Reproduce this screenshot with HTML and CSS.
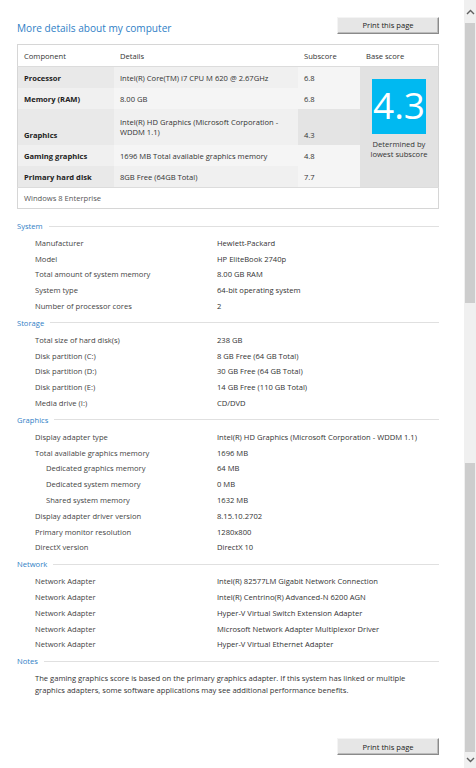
FILE: index.html
```html
<!DOCTYPE html>
<html>
<head>
<meta charset="utf-8">
<link rel="stylesheet" href="styles.css">
</head>
<body>
<div class="window">
  <div class="content">
    <div class="top">
      <h1 class="title">More details about my computer</h1>
      <button class="btn">Print this page</button>
    </div>
    <table class="scores">
      <tr class="head">
        <td class="c1">Component</td>
        <td class="c2">Details</td>
        <td class="c3">Subscore</td>
        <td class="c4">Base score</td>
      </tr>
      <tr class="r odd">
        <td class="c1 name">Processor</td>
        <td class="c2">Intel(R) Core(TM) i7 CPU M 620 @ 2.67GHz</td>
        <td class="c3">6.8</td>
        <td class="c4 base" rowspan="5">
          <div class="base-wrap">
            <div class="badge">4.3</div>
            <div class="det">Determined by<br>lowest subscore</div>
          </div>
        </td>
      </tr>
      <tr class="r even">
        <td class="c1 name">Memory (RAM)</td>
        <td class="c2">8.00 GB</td>
        <td class="c3">6.8</td>
      </tr>
      <tr class="r odd tall">
        <td class="c1 name bottom">Graphics</td>
        <td class="c2">Intel(R) HD Graphics (Microsoft Corporation -<br>WDDM 1.1)</td>
        <td class="c3 bottom low">4.3</td>
      </tr>
      <tr class="r even">
        <td class="c1 name">Gaming graphics</td>
        <td class="c2">1696 MB Total available graphics memory</td>
        <td class="c3">4.8</td>
      </tr>
      <tr class="r odd">
        <td class="c1 name">Primary hard disk</td>
        <td class="c2">8GB Free (64GB Total)</td>
        <td class="c3">7.7</td>
      </tr>
      <tr class="os">
        <td colspan="4">Windows 8 Enterprise</td>
      </tr>
    </table>

    <section class="sec">
      <div class="sec-head">System</div>
      <div class="items">
        <div class="row"><span class="lbl">Manufacturer</span><span class="val">Hewlett-Packard</span></div>
        <div class="row"><span class="lbl">Model</span><span class="val">HP EliteBook 2740p</span></div>
        <div class="row"><span class="lbl">Total amount of system memory</span><span class="val">8.00 GB RAM</span></div>
        <div class="row"><span class="lbl">System type</span><span class="val">64-bit operating system</span></div>
        <div class="row"><span class="lbl">Number of processor cores</span><span class="val">2</span></div>
      </div>
    </section>

    <section class="sec">
      <div class="sec-head">Storage</div>
      <div class="items">
        <div class="row"><span class="lbl">Total size of hard disk(s)</span><span class="val">238 GB</span></div>
        <div class="row"><span class="lbl">Disk partition (C:)</span><span class="val">8 GB Free (64 GB Total)</span></div>
        <div class="row"><span class="lbl">Disk partition (D:)</span><span class="val">30 GB Free (64 GB Total)</span></div>
        <div class="row"><span class="lbl">Disk partition (E:)</span><span class="val">14 GB Free (110 GB Total)</span></div>
        <div class="row"><span class="lbl">Media drive (I:)</span><span class="val">CD/DVD</span></div>
      </div>
    </section>

    <section class="sec">
      <div class="sec-head">Graphics</div>
      <div class="items">
        <div class="row"><span class="lbl">Display adapter type</span><span class="val">Intel(R) HD Graphics (Microsoft Corporation - WDDM 1.1)</span></div>
        <div class="row"><span class="lbl">Total available graphics memory</span><span class="val">1696 MB</span></div>
        <div class="row"><span class="lbl ind">Dedicated graphics memory</span><span class="val">64 MB</span></div>
        <div class="row"><span class="lbl ind">Dedicated system memory</span><span class="val">0 MB</span></div>
        <div class="row"><span class="lbl ind">Shared system memory</span><span class="val">1632 MB</span></div>
        <div class="row"><span class="lbl">Display adapter driver version</span><span class="val">8.15.10.2702</span></div>
        <div class="row"><span class="lbl">Primary monitor resolution</span><span class="val">1280x800</span></div>
        <div class="row"><span class="lbl">DirectX version</span><span class="val">DirectX 10</span></div>
      </div>
    </section>

    <section class="sec">
      <div class="sec-head">Network</div>
      <div class="items">
        <div class="row"><span class="lbl">Network Adapter</span><span class="val">Intel(R) 82577LM Gigabit Network Connection</span></div>
        <div class="row"><span class="lbl">Network Adapter</span><span class="val">Intel(R) Centrino(R) Advanced-N 6200 AGN</span></div>
        <div class="row"><span class="lbl">Network Adapter</span><span class="val">Hyper-V Virtual Switch Extension Adapter</span></div>
        <div class="row"><span class="lbl">Network Adapter</span><span class="val">Microsoft Network Adapter Multiplexor Driver</span></div>
        <div class="row"><span class="lbl">Network Adapter</span><span class="val">Hyper-V Virtual Ethernet Adapter</span></div>
      </div>
    </section>

    <section class="sec">
      <div class="sec-head">Notes</div>
      <p class="note">The gaming graphics score is based on the primary graphics adapter. If this system has linked or multiple graphics adapters, some software applications may see additional performance benefits.</p>
    </section>

    <div class="bottom-bar">
      <button class="btn">Print this page</button>
    </div>
  </div>
  <div class="scrollbar">
    <div class="arrow up"><svg width="9" height="6" viewBox="0 0 9 6"><path d="M1 5 L4.5 1.5 L8 5" fill="none" stroke="#606060" stroke-width="1.4"/></svg></div>
    <div class="thumb t1"></div>
    <div class="gap"></div>
    <div class="thumb t2"></div>
    <div class="arrow down"><svg width="9" height="6" viewBox="0 0 9 6"><path d="M1 1 L4.5 4.5 L8 1" fill="none" stroke="#606060" stroke-width="1.4"/></svg></div>
  </div>
</div>
</body>
</html>
```
FILE: styles.css
```css
html, body {
  margin: 0;
  padding: 0;
  background: #ffffff;
}
body {
  width: 476px;
  height: 768px;
  overflow: hidden;
  font-family: "Open Sans", "Noto Sans", sans-serif;
  font-size: 7.6px;
  color: #333333;
}
.window {
  display: flex;
  width: 476px;
  height: 768px;
}
.content {
  flex: 1;
  padding: 17px 25px 0 17px;
  display: flex;
  flex-direction: column;
}
.top {
  display: flex;
  justify-content: space-between;
  align-items: center;
  height: 16px;
}
.title {
  margin: 0;
  font-weight: normal;
  font-size: 10.1px;
  color: #2f80c6;
  line-height: 16px;
  position: relative;
  top: 3px;
}
.btn {
  width: 102px;
  height: 17px;
  padding: 0;
  font-family: inherit;
  font-size: 7.6px;
  color: #1a1a1a;
  background: #e6e6e6;
  border: 1px solid #d0d0d0;
  border-right-color: #8a8a8a;
  border-bottom-color: #8a8a8a;
  border-top-color: #f4f4f4;
  border-left-color: #f4f4f4;
  box-shadow: inset -1px -1px 0 #bcbcbc;
}
.scores {
  margin-top: 11px;
  border-collapse: collapse;
  width: 421px;
  border: 1px solid #d6d6d6;
  table-layout: fixed;
}
.scores td {
  padding: 0 0 0 6px;
  vertical-align: middle;
  white-space: nowrap;
}
.c1 { width: 90px; }
.c2 { width: 178px; }
.c3 { width: 56px; }
.c4 { width: 72px; }
.head td {
  height: 21px;
  background: #ffffff;
  border-bottom: 1px solid #dcdcdc;
}
.r td { height: 21px; }
.r.tall td { height: 31px; }
.r.odd td { background: #f0f0f0; }
.r.even td { background: #f5f5f5; }
.r td.name { font-weight: bold; color: #222; }
.r.odd td.c1 { background: #e9e9e9; }
.r.even td.c1 { background: #f0f0f0; }
.r td.c3 { background: #f5f5f5; }
.r td.c3.low { background: #e4e4e4; }
.scores td.bottom { vertical-align: bottom; padding-bottom: 5px; }
.scores td.base {
  background: #e2e2e2;
  vertical-align: top;
  padding: 0;
}
.base-wrap {
  display: flex;
  flex-direction: column;
  align-items: center;
  padding-top: 12px;
}
.badge {
  width: 54px;
  height: 55px;
  background: #00b9f1;
  color: #ffffff;
  font-size: 37px;
  line-height: 52px;
  text-align: center;
  font-family: "Open Sans", "Noto Sans", sans-serif;
}
.det {
  margin-top: 5px;
  text-align: center;
  line-height: 10px;
  color: #333;
}
.os td {
  height: 20px;
  background: #ffffff;
  color: #555;
  border-top: 1px solid #dcdcdc;
}
.sec {
  display: flex;
  flex-direction: column;
}
.sec:first-of-type { margin-top: 8px; }
.sec-head {
  display: flex;
  align-items: center;
  height: 18px;
  color: #2f80c6;
}
.sec-head::after {
  content: "";
  flex: 1;
  height: 1px;
  background: #e0e0e0;
  margin-left: 6px;
}
.items {
  display: flex;
  flex-direction: column;
}
.row {
  display: grid;
  grid-template-columns: 182px 1fr;
  height: 15.8px;
  align-items: center;
  padding-left: 18px;
  white-space: nowrap;
}
.lbl { color: #444; }
.lbl.ind { padding-left: 11px; }
.val { color: #333; }
.note {
  margin: 3px 0 0 18px;
  padding-right: 4px;
  line-height: 11.5px;
  color: #333;
}
.bottom-bar {
  margin-top: auto;
  margin-bottom: 13px;
  display: flex;
  justify-content: flex-end;
}
.scrollbar {
  width: 13px;
  background: #f0f0f0;
  display: flex;
  flex-direction: column;
  align-items: center;
}
.arrow {
  height: 23px;
  display: flex;
  align-items: center;
  justify-content: center;
  width: 100%;
}
.arrow.down { height: 16px; }
.thumb {
  width: 10px;
  background: #cdcdcd;
}
.t1 { height: 280px; }
.gap { height: 160px; }
.t2 { height: 289px; }
```
